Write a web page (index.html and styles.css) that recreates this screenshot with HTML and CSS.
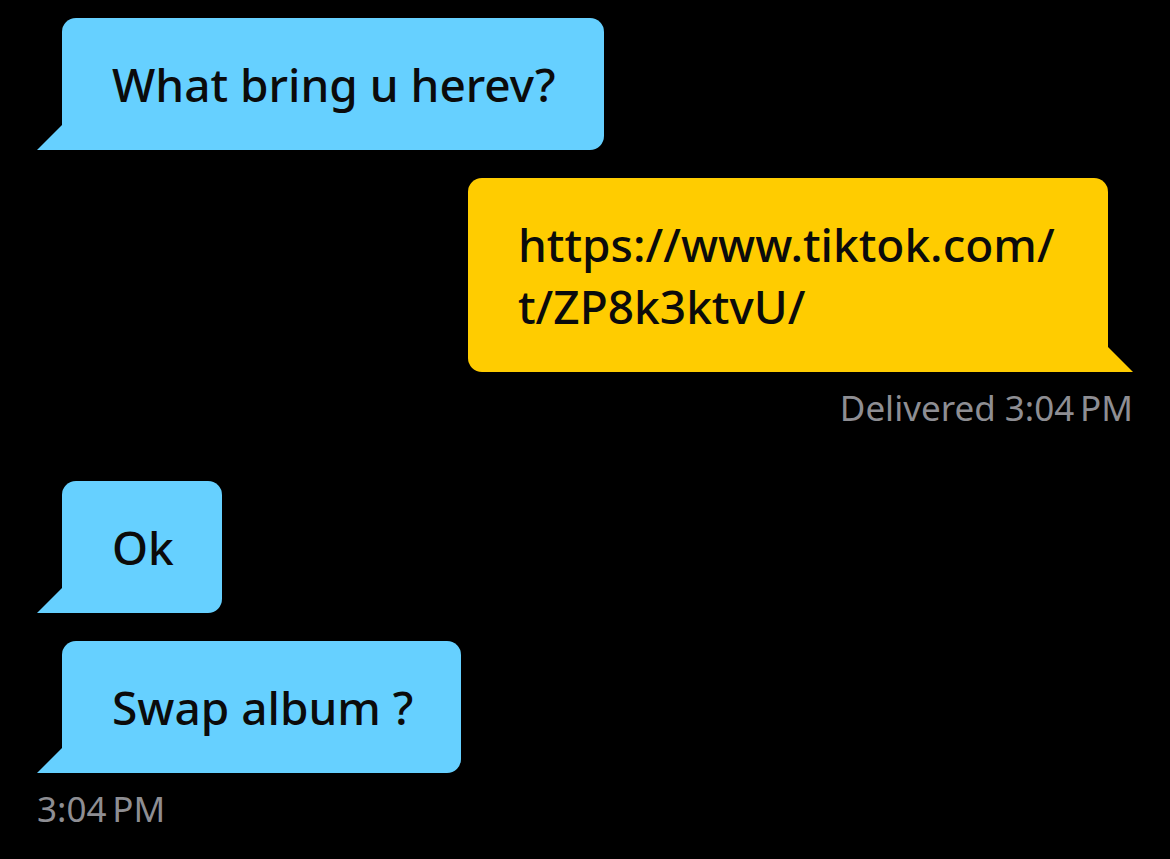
FILE: index.html
```html
<!DOCTYPE html>
<html>
  <head>
    <title>Chat</title>
    <link rel="stylesheet" href="styles.css">
  </head>
  <body>
    <main class="chat">
      <div class="bubble in">What bring u herev?</div>
      <div class="bubble out">https://www.tiktok.com/<wbr>t/ZP8k3ktvU/</div>
      <div class="meta out-meta">Delivered 3:04&#8239;PM</div>
      <div class="bubble in first">Ok</div>
      <div class="bubble in">Swap album ?</div>
      <div class="meta in-meta">3:04&#8239;PM</div>
    </main>
  </body>
</html>
```

FILE: styles.css
```css
* {
  margin: 0;
  padding: 0;
  box-sizing: border-box;
}
body {
  background-color: #000;
  font-family: "Noto Sans", "Liberation Sans", sans-serif;
  width: 1170px;
  height: 859px;
  overflow: hidden;
}
.chat {
  display: flex;
  flex-direction: column;
  padding: 18px 37px;
}
.bubble {
  position: relative;
  align-self: flex-start;
  max-width: 640px;
  margin-left: 25px;
  padding: 35px 48px 35px 50px;
  border-radius: 14px 14px 14px 0;
  background-color: #66d0ff;
  color: #0b0b0b;
  font-size: 46px;
  font-weight: 500;
  line-height: 62px;
}
/* the little corner tail */
.bubble::before {
  content: "";
  position: absolute;
  bottom: 0;
  left: -25px;
  width: 25px;
  height: 25px;
  background-color: inherit;
  clip-path: polygon(100% 0, 100% 100%, 0 100%);
}
.bubble + .bubble {
  margin-top: 28px;
}
.bubble.out {
  align-self: flex-end;
  margin-left: 0;
  margin-right: 25px;
  border-radius: 14px 14px 0 14px;
  background-color: #ffcc00;
}
.bubble.out::before {
  left: auto;
  right: -25px;
  clip-path: polygon(0 0, 100% 100%, 0 100%);
}
.bubble.first {
  margin-top: 53px;
}
.meta {
  color: #8e8e93;
  font-size: 35px;
  line-height: 40px;
  margin-top: 16px;
}
.out-meta {
  align-self: flex-end;
}
.in-meta {
  align-self: flex-start;
}
```
